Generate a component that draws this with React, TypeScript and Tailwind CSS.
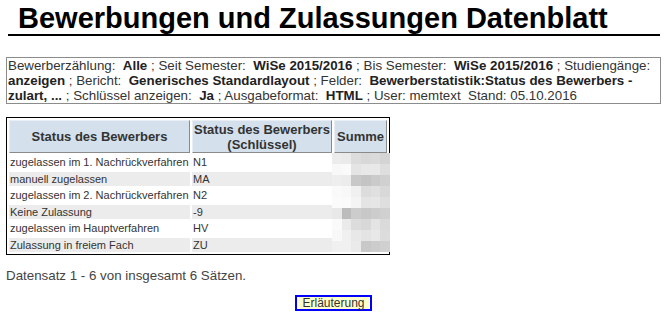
import React from 'react';

type Row = { label: string; key: string };

const rows: Row[] = [
  { label: 'zugelassen im 1. Nachrückverfahren', key: 'N1' },
  { label: 'manuell zugelassen', key: 'MA' },
  { label: 'zugelassen im 2. Nachrückverfahren', key: 'N2' },
  { label: 'Keine Zulassung', key: '-9' },
  { label: 'zugelassen im Hauptverfahren', key: 'HV' },
  { label: 'Zulassung in freiem Fach', key: 'ZU' },
];

// pixelated (anonymised) sums column, one entry per block row
const sumBlocks: string[][] = [
  ['#ececec', '#eaeaea', '#dcdcdc', '#d8d8d8', '#dadada', '#d4d4d4'],
  ['#f8f8f8', '#fafafa', '#e4e4e4', '#e8e8e8', '#e8e8e8', '#dedede'],
  ['#eeeeee', '#ececec', '#c8c8c8', '#c4c4c4', '#cacaca', '#d0d0d0'],
  ['#fafafa', '#f8f8f8', '#f0f0f0', '#dcdcdc', '#e0e0e0', '#d8d8d8'],
  ['#fbfbfb', '#fafafa', '#f4f4f4', '#e4e4e4', '#e6e6e6', '#dedede'],
  ['#e8e8e8', '#bcbcbc', '#cccccc', '#c8c8c8', '#cccccc', '#d0d0d0'],
  ['#fafafa', '#eaeaea', '#dcdcdc', '#d8d8d8', '#e4e4e4', '#dadada'],
  ['#f8f8f8', '#f0f0f0', '#e8e8e8', '#e4e4e4', '#e8e8e8', '#dcdcdc'],
  ['#f0f0f0', '#f0f0f0', '#eaeaea', '#c8c8c8', '#cccccc', '#d0d0d0'],
];

const th =
  'bg-[#d4e0ec] border border-t-[#e8eef4] border-l-[#e8eef4] border-r-[#8a8a8a] border-b-[#8a8a8a] text-[13px] leading-[15px] font-bold text-[#333] text-center align-middle px-[1px]';

function Val({ children }: { children: React.ReactNode }) {
  return <b className="text-[#222]">{children}</b>;
}

export default function App() {
  return (
    <div className="min-h-screen bg-white px-[6px] font-['Liberation_Sans',Arial,sans-serif] text-[#333]">
      <h1 className="mt-[2px] ml-[2px] mr-[1px] pl-[10px] border-b-2 border-black text-[29px] leading-[32px] font-bold text-black">
        Bewerbungen und Zulassungen Datenblatt
      </h1>

      {/* report parameters */}
      <div className="mt-[21px] border border-[#8c8c8c] px-[1px] text-[13.33px] leading-[15px]">
        Bewerberzählung:&nbsp; <Val>Alle</Val> ; Seit Semester:&nbsp; <Val>WiSe 2015/2016</Val> ; Bis Semester:&nbsp;{' '}
        <Val>WiSe 2015/2016</Val> ; Studiengänge:&nbsp; <Val>anzeigen</Val> ; Bericht:&nbsp;{' '}
        <Val>Generisches Standardlayout</Val> ; Felder:&nbsp; <Val>Bewerberstatistik:Status des Bewerbers - zulart, ...</Val>{' '}
        ; Schlüssel anzeigen:&nbsp; <Val>Ja</Val> ; Ausgabeformat:&nbsp; <Val>HTML</Val> ; User: memtext&nbsp; Stand: 05.10.2016
      </div>

      <table className="mt-[13px] border border-black border-separate border-spacing-[2px]">
        <thead>
          <tr>
            <th className={`${th} w-[181px] h-[33px]`}>Status des Bewerbers</th>
            <th className={`${th} w-[140px]`}>
              Status des Bewerbers
              <br />
              (Schlüssel)
            </th>
            <th className={`${th} w-[53px]`}>Summe</th>
          </tr>
        </thead>
        <tbody>
          {rows.map((r, i) => (
            <tr key={r.key} className={i % 2 === 1 ? 'bg-[#ececec]' : 'bg-white'}>
              <td className="h-[14px] px-[1px] text-[11px] leading-[14px] whitespace-nowrap">{r.label}</td>
              <td className="h-[14px] px-[1px] text-[11px] leading-[14px]">{r.key}</td>
              {i === 0 && (
                <td rowSpan={6} className="p-0 bg-white align-top">
                  <div className="-ml-[2px] -mr-[3px] -mt-[2px] grid grid-cols-6">
                    {sumBlocks.flatMap((line, y) =>
                      line.map((c, x) => (
                        <div key={`${y}-${x}`} className="h-[11px]" style={{ backgroundColor: c }} />
                      ))
                    )}
                  </div>
                </td>
              )}
            </tr>
          ))}
        </tbody>
      </table>

      <p className="mt-[13px] text-[13.33px] leading-[16px] text-[#444]">Datensatz 1 - 6 von insgesamt 6 Sätzen.</p>

      <div className="mt-[11px] flex justify-center">
        <button className="h-[16px] px-[5px] border-2 border-[#0000ff] bg-[#ffffcc] text-[12px] leading-[12px] text-[#333]">
          Erläuterung
        </button>
      </div>
    </div>
  );
}
